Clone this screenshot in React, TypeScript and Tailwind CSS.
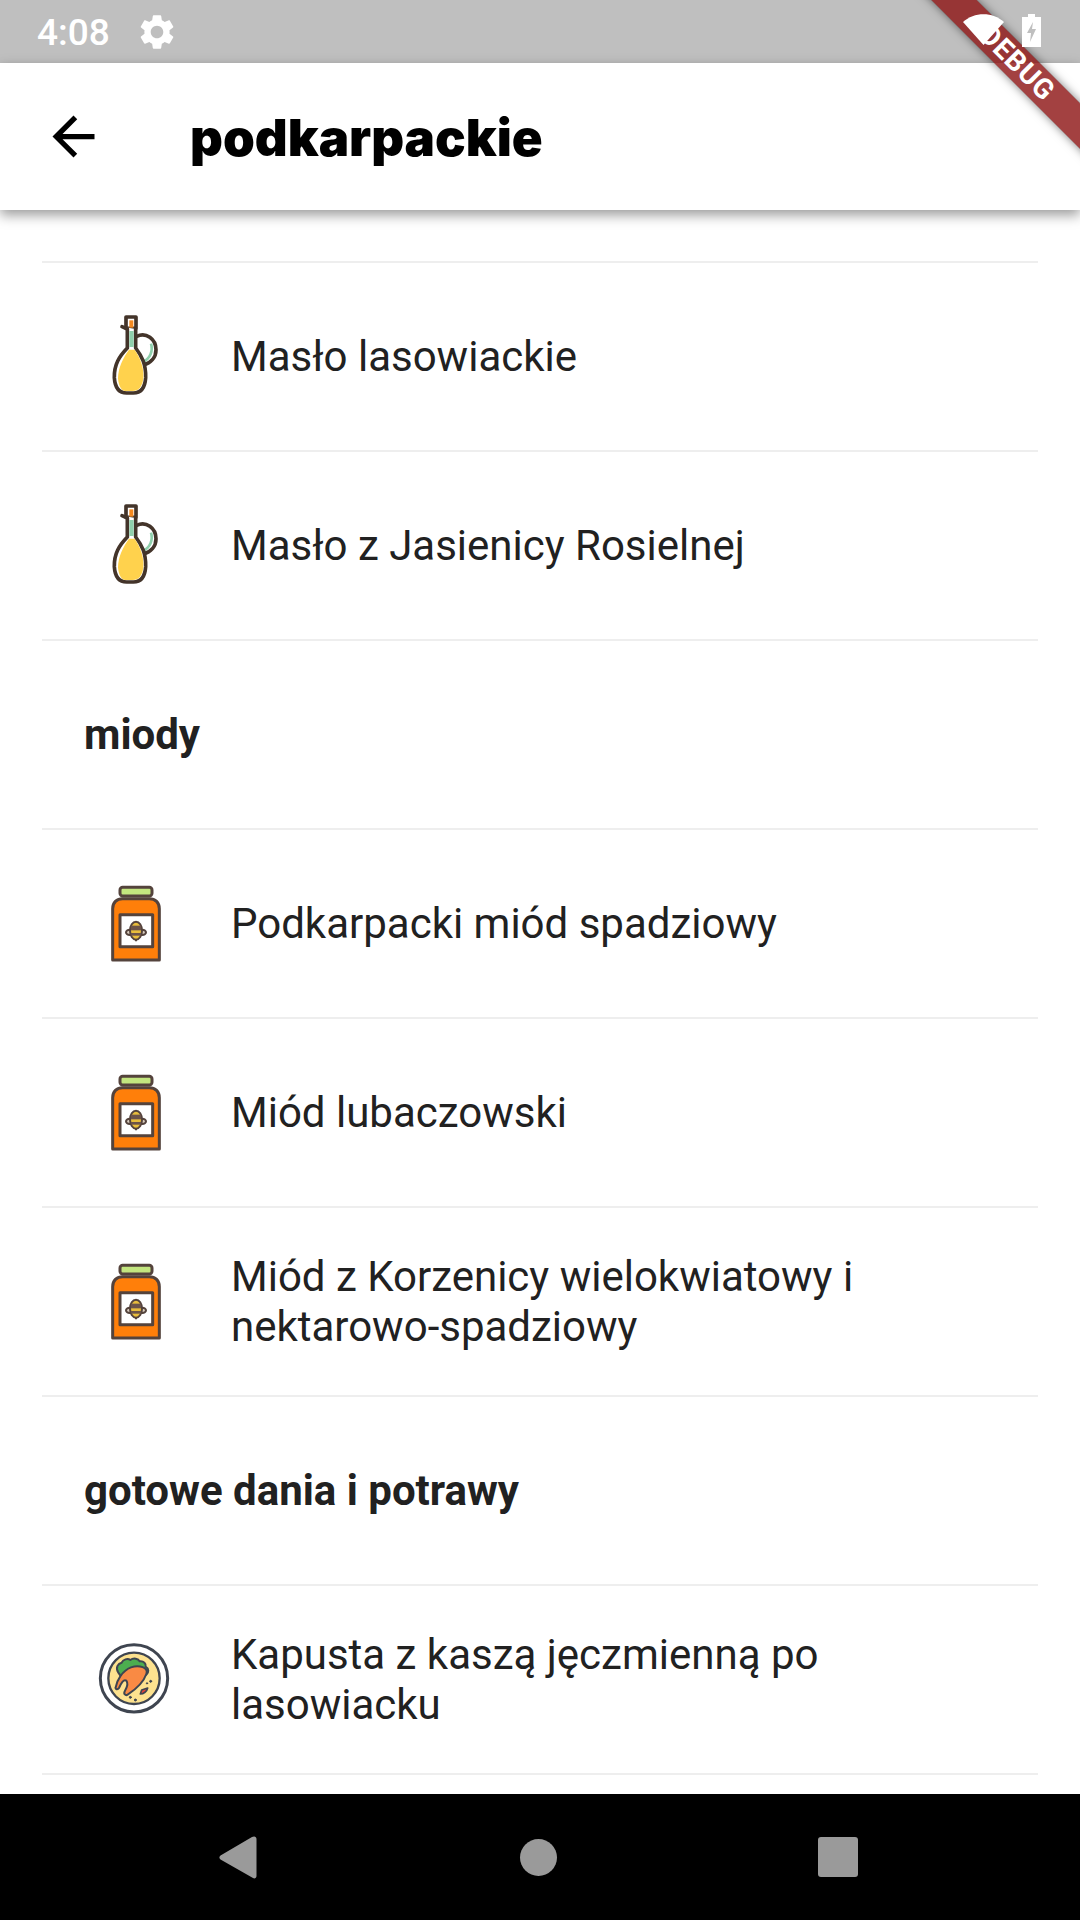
const roboto = "font-['Roboto',sans-serif]";

function OilIcon() {
  return (
    <svg width="90" height="110" viewBox="0 5 270 330" fill="none" stroke="#43342a" strokeWidth="11" strokeLinejoin="round" strokeLinecap="round">
      {/* handle */}
      <path d="M140 108 C168 94 198 116 198 148 C198 172 182 188 160 194" />
      <path d="M183 130 C190 152 180 174 160 184" stroke="#8fd0ac" strokeWidth="8" strokeLinecap="butt" />
      {/* stopper */}
      <rect x="108" y="50" width="30" height="34" fill="#fff" />
      <rect x="118" y="60" width="12" height="22" fill="#f5891f" stroke="none" />
      {/* bottle */}
      <path d="M96 79 L112 86 L112 143 C88 168 72 192 73 232 C75 264 90 278 110 278 L130 278 C150 278 165 264 167 232 C168 192 156 168 137 143 L137 86" fill="#fff" />
      <path d="M118 92 L131 92 L131 140 L118 140 Z" fill="#8fd0ac" stroke="none" />
      <path d="M117 148 L134 148 C150 172 162 200 160 232 C158 258 146 272 128 272 L106 272 C94 272 86 258 84 234 C84 202 100 172 117 148 Z" fill="#ffd24d" stroke="none" />
    </svg>
  );
}

function JarIcon() {
  return (
    <svg width="90" height="100" viewBox="0 0 270 300" fill="none" stroke="#54433c" strokeWidth="9" strokeLinejoin="round">
      <rect x="90" y="40" width="96" height="26" rx="8" fill="#c3e67f" />
      <path d="M68 258 L68 104 C68 86 80 74 98 74 L178 74 C196 74 208 86 208 104 L208 258 Z" fill="#ff7f0a" />
      <rect x="90" y="122" width="98" height="96" fill="#fff" />
      {/* bee */}
      <ellipse cx="119" cy="175" rx="11" ry="8" fill="#d9cdbf" strokeWidth="6" />
      <ellipse cx="157" cy="175" rx="11" ry="8" fill="#d9cdbf" strokeWidth="6" />
      <ellipse cx="138" cy="170" rx="18" ry="27" fill="#e8bd3c" strokeWidth="6" />
      <rect x="123" y="155" width="30" height="14" fill="#6c5349" stroke="none" />
      <rect x="123" y="177" width="30" height="8" fill="#6c5349" stroke="none" />
      <path d="M138 196 L138 202" strokeWidth="6" />
    </svg>
  );
}

function PlateIcon() {
  return (
    <svg width="100" height="100" viewBox="0 0 300 300" fill="none" stroke="#3f4550" strokeWidth="9" strokeLinejoin="round" strokeLinecap="round">
      <circle cx="147" cy="145" r="101" fill="#fff" />
      <circle cx="147" cy="145" r="77" fill="#fde28f" strokeWidth="7" />
      <path d="M100 128 C90 112 100 100 110 98 C114 88 128 84 136 90 C146 82 160 86 164 94 C176 92 184 102 182 110 C192 116 192 128 184 134 L110 142 Z" fill="#4cae4f" strokeWidth="6" />
      <path d="M92 172 C96 150 112 122 138 112 C162 104 192 112 184 132 C176 156 152 178 128 194 C122 198 114 192 120 182 C126 172 130 160 124 152 C116 146 108 160 102 174 C98 180 90 178 92 172 Z" fill="#f98a44" strokeWidth="6" />
      <path d="M166 192 C176 192 186 184 188 174 L170 180 Z" fill="#e8423a" strokeWidth="5" />
      <circle cx="197" cy="154" r="3" fill="#3f4550" strokeWidth="3" />
      <circle cx="186" cy="160" r="2" fill="#3f4550" strokeWidth="3" />
      <circle cx="136" cy="202" r="3" fill="#3f4550" strokeWidth="3" />
      <circle cx="151" cy="210" r="3" fill="#3f4550" strokeWidth="3" />
    </svg>
  );
}

function Row({ icon, pad, children }: { icon?: React.ReactNode; pad?: string; children: React.ReactNode }) {
  return (
    <div className="h-[189px] shrink-0 flex items-center border-b-2 border-[#eeeeee]">
      <div className={`w-[189px] shrink-0 ${pad}`}>{icon}</div>
      <p className="text-[42px] leading-[50px] text-[#212121] pr-[60px]">{children}</p>
    </div>
  );
}

function Heading({ children }: { children: React.ReactNode }) {
  return (
    <div className="h-[189px] shrink-0 flex items-center border-b-2 border-[#eeeeee] pl-[42px]">
      <p className="text-[42px] leading-[50px] font-bold text-[#212121]">{children}</p>
    </div>
  );
}

export default function App() {
  return (
    <div className={`relative w-[1080px] h-[1920px] overflow-hidden flex flex-col bg-white ${roboto}`}>
      {/* status bar */}
      <div className="h-[63px] shrink-0 bg-[#bfbfbf] flex items-center pl-[37px]">
        <span className="text-[37px] font-medium text-white translate-y-[1px]">4:08</span>
        <svg className="ml-[26px]" width="42" height="42" viewBox="0 0 24 24" fill="#fff">
          <path d="M19.14 12.94c.04-.3.06-.61.06-.94 0-.32-.02-.64-.07-.94l2.03-1.58c.18-.14.23-.41.12-.61l-1.92-3.32c-.12-.22-.37-.29-.59-.22l-2.39.96c-.5-.38-1.03-.7-1.62-.94l-.36-2.54c-.04-.24-.24-.41-.48-.41h-3.84c-.24 0-.43.17-.47.41l-.36 2.54c-.59.24-1.13.57-1.62.94l-2.39-.96c-.22-.08-.47 0-.59.22L2.74 8.87c-.12.21-.08.47.12.61l2.03 1.58c-.05.3-.09.63-.09.94s.02.64.07.94l-2.03 1.58c-.18.14-.23.41-.12.61l1.92 3.32c.12.22.37.29.59.22l2.39-.96c.5.38 1.03.7 1.62.94l.36 2.54c.05.24.24.41.48.41h3.84c.24 0 .44-.17.47-.41l.36-2.54c.59-.24 1.13-.56 1.62-.94l2.39.96c.22.08.47 0 .59-.22l1.92-3.32c.12-.22.07-.47-.12-.61l-2.01-1.58zM12 15.6c-1.98 0-3.6-1.62-3.6-3.6s1.62-3.6 3.6-3.6 3.6 1.62 3.6 3.6-1.62 3.6-3.6 3.6z" />
        </svg>
      </div>

      {/* app bar */}
      <div className="relative z-10 h-[147px] shrink-0 bg-white flex items-center pl-[42px] shadow-[0_5px_12px_rgba(0,0,0,0.4)]">
        <svg width="63" height="63" viewBox="0 0 24 24" fill="#000">
          <path d="M20 11H7.83l5.59-5.59L12 4l-8 8 8 8 1.41-1.41L7.83 13H20v-2z" />
        </svg>
        <h1 className="ml-[85px] pt-[4px] text-[51px] font-black text-black font-['Inter',sans-serif]">podkarpackie</h1>
      </div>

      {/* list */}
      <div className="flex-1 min-h-0 overflow-hidden mx-[42px] flex flex-col">
        <div className="h-[53px] shrink-0 border-b-2 border-[#eeeeee]" />
        <Row icon={<OilIcon />} pad="pl-[48px]">Masło lasowiackie</Row>
        <Row icon={<OilIcon />} pad="pl-[48px]">Masło z Jasienicy Rosielnej</Row>
        <Heading>miody</Heading>
        <Row icon={<JarIcon />} pad="pl-[48px]">Podkarpacki miód spadziowy</Row>
        <Row icon={<JarIcon />} pad="pl-[48px]">Miód lubaczowski</Row>
        <Row icon={<JarIcon />} pad="pl-[48px]">Miód z Korzenicy wielokwiatowy i nektarowo-spadziowy</Row>
        <Heading>gotowe dania i potrawy</Heading>
        <Row icon={<PlateIcon />} pad="pl-[43px]">Kapusta z kaszą jęczmienną po lasowiacku</Row>
      </div>

      {/* nav bar */}
      <div className="relative z-30 h-[126px] shrink-0 bg-black flex items-center justify-between pl-[219px] pr-[222px]">
        <svg width="38" height="43" viewBox="0 0 38 43" fill="#9a9a9a">
          <path d="M35 0.5 C36.5 0.5 37.5 1.5 37.5 3 L37.5 40 C37.5 42 35.5 43 34 42 L1.5 23.5 C0 22.5 0 20.5 1.5 19.5 L33 1 Z" />
        </svg>
        <div className="w-[37px] h-[37px] rounded-full bg-[#9a9a9a] translate-x-[1px]" />
        <div className="w-[40px] h-[40px] rounded-[3px] bg-[#9a9a9a]" />
      </div>

      {/* debug banner: the dark under-layer stands in for the shadow Flutter paints beneath the band */}
      <div className="absolute z-20 left-[867px] top-[47px] w-[300px] h-[32px] rotate-45 bg-black/50 shadow-[0_0_10px_rgba(0,0,0,0.5)]">
        <div className="w-full h-full bg-[#b71c1c]/[0.63] flex items-center justify-center">
          <span className="text-[28px] leading-none font-bold tracking-wide text-white">DEBUG</span>
        </div>
      </div>

      {/* status icons stay above the banner */}
      <div className="absolute z-30 right-[39px] top-[14px] flex items-start">
        <svg width="41" height="31" viewBox="0 0 41 31" fill="#fff">
          <path d="M0 8 C11 -2.5 30 -2.5 41 8 L20.5 31 Z" />
        </svg>
        <svg className="ml-[18px]" width="19" height="33" viewBox="0 0 19 33" fill="#fff">
          <path d="M6 0 H13 V3 H19 V33 H0 V3 H6 Z" />
          <path d="M11 8 L5 19 H9 L8 28 L14 15 H10 Z" fill="#bfbfbf" />
        </svg>
      </div>
    </div>
  );
}
